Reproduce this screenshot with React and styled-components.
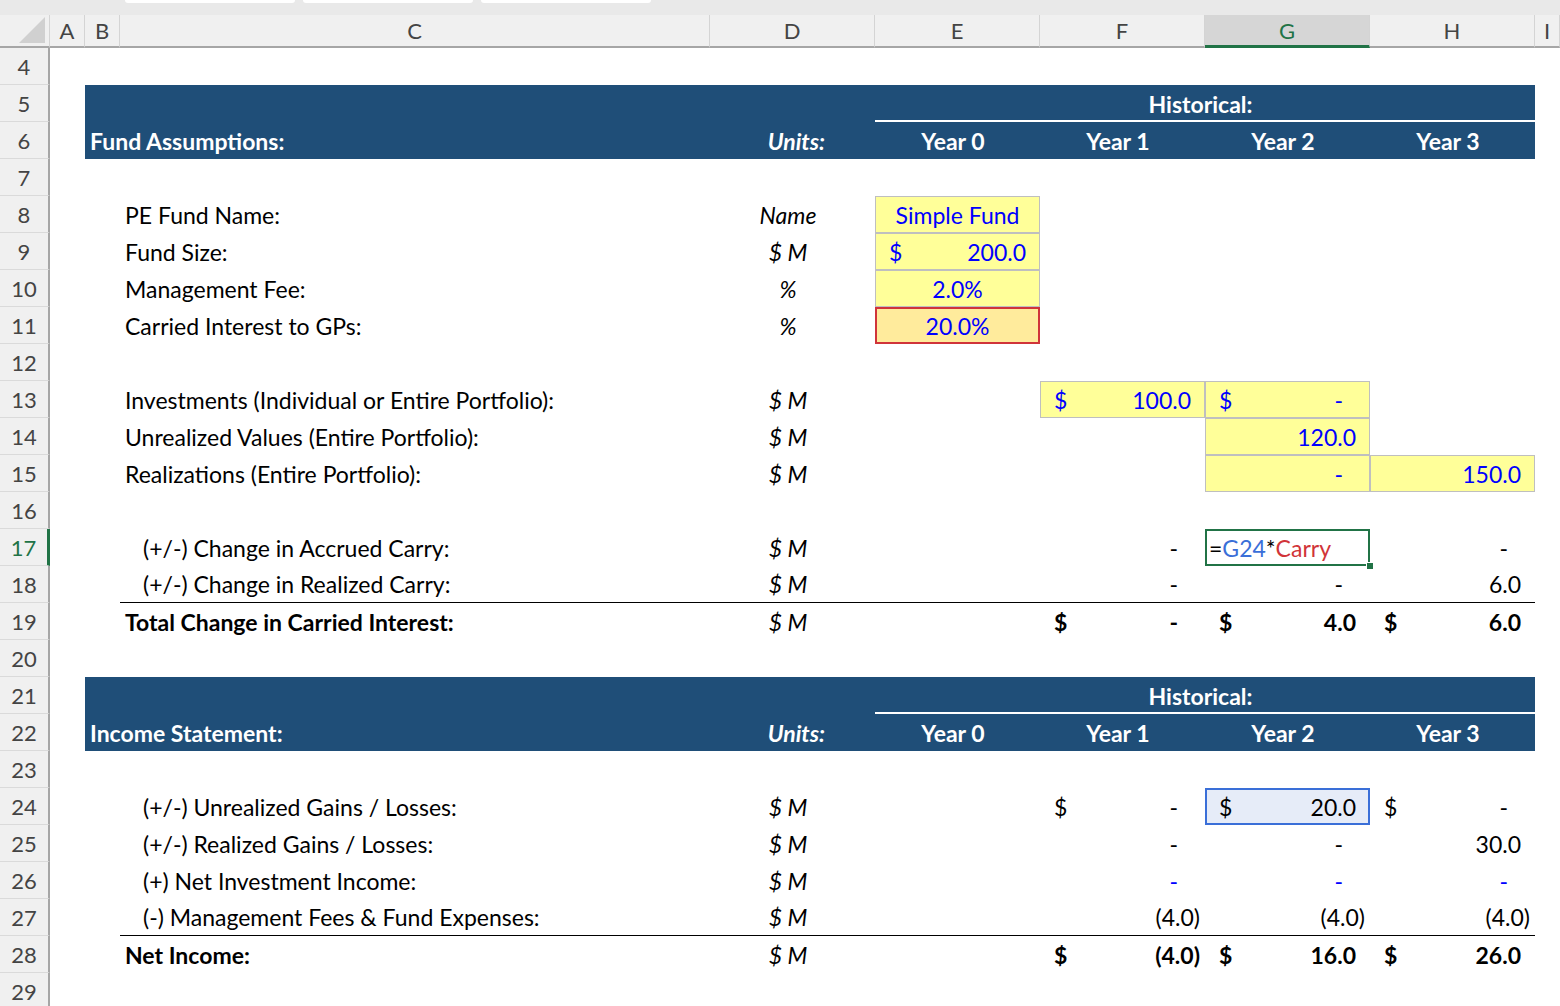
import React from 'react';
import styled, { createGlobalStyle } from 'styled-components';

const Global = createGlobalStyle`
  body { margin: 0; background: #fff; font-family: Lato, "Open Sans", sans-serif; overflow: hidden; }
`;

const COLS = '50px 35px 35px 590px 165px 165px 165px 165px 165px 1fr';
const NAVY = '#1f4e78';
const YELLOW = '#ffff99';

const TabStrip = styled.div`
  height: 15px;
  background: #e9e9e9;
  display: flex;
  gap: 8px;
  padding-left: 125px;
  & > span { width: 170px; height: 3px; background: #fff; border-radius: 0 0 6px 6px; }
`;

const Grid = styled.div`
  display: grid;
  grid-template-columns: ${COLS};
  height: ${p => p.$h || 37}px;
`;

const ColHead = styled.div`
  background: ${p => (p.$sel ? '#d6d6d6' : '#f0f0f0')};
  color: ${p => (p.$sel ? '#217346' : '#444')};
  border-right: 1px solid #d4d4d4;
  border-bottom: ${p => (p.$sel ? '3px solid #217346' : '2px solid #a6a6a6')};
  font-size: 22px;
  display: flex;
  align-items: center;
  justify-content: center;
  box-sizing: border-box;
`;

const Corner = styled(ColHead)`
  position: relative;
  &::after {
    content: '';
    position: absolute; right: 4px; bottom: 3px;
    border-left: 26px solid transparent;
    border-bottom: 26px solid #d0d0d0;
  }
`;

const RowHead = styled.div`
  background: #f0f0f0;
  color: ${p => (p.$sel ? '#217346' : '#444')};
  border-bottom: 1px solid #dadada;
  border-right: ${p => (p.$sel ? '3px solid #217346' : '2px solid #a6a6a6')};
  box-sizing: border-box;
  font-size: 22px;
  display: flex;
  align-items: center;
  justify-content: center;
`;

const Cell = styled.div`
  grid-column: ${p => p.$c} / span ${p => p.$s || 1};
  display: flex;
  align-items: center;
  justify-content: ${p => p.$j || 'flex-start'};
  padding: 0 ${p => p.$pr ?? 14}px 0 ${p => p.$pl ?? 5}px;
  box-sizing: border-box;
  font-size: 23px;
  white-space: nowrap;
  font-weight: ${p => (p.$b ? 700 : 400)};
  font-style: ${p => (p.$i ? 'italic' : 'normal')};
  color: ${p => p.$color || '#000'};
  background: ${p => p.$fill || 'transparent'};
  box-shadow: ${p => p.$box || 'none'};
  border-bottom: ${p => p.$line || 'none'};
  position: relative;
`;

const Band = styled(Cell)`
  background: ${NAVY};
  color: #fff;
  font-weight: 700;
`;

const HistBand = styled(Band)`
  margin-top: 0;
  &::after {
    content: '';
    position: absolute; left: 0; right: 0; bottom: 0;
    height: 2px; background: #fff;
  }
`;

const Handle = styled.span`
  position: absolute; right: -4px; bottom: -4px;
  width: 6px; height: 6px; background: #217346; border: 1px solid #fff;
`;

const inputBox = 'inset 0 0 0 1px #bfbfbf';

const Acc = ({ c, v, b, color, fill, box, line, pr }) => (
  <Cell $c={c} $j="space-between" $pl={14} $pr={pr ?? 14} $b={b} $color={color} $fill={fill} $box={box} $line={line}>
    <span>$</span><span>{v}</span>
  </Cell>
);

const Num = ({ c, v, b, color, fill, box, line }) => {
  const pr = v === '-' ? 27 : v.startsWith('(') ? 5 : 14;
  return <Cell $c={c} $j="flex-end" $pr={pr} $b={b} $color={color} $fill={fill} $box={box} $line={line}>{v}</Cell>;
};

const Units = ({ line }) => <Cell $c={5} $j="center" $i $line={line}>$ M</Cell>;

const Row = ({ n, sel, children }) => (
  <Grid>
    <RowHead $sel={sel}>{n}</RowHead>
    {children}
  </Grid>
);

const HeaderPair = ({ start, title }) => (
  <>
    <Row n={start}>
      <Band $c={3} $s={3} />
      <HistBand $c={6} $s={4} $j="center">Historical:</HistBand>
    </Row>
    <Row n={start + 1}>
      <Band $c={3} $s={2} $pl={5}>{title}</Band>
      <Band $c={5} $j="flex-end" $i $pr={50}>Units:</Band>
      {['Year 0', 'Year 1', 'Year 2', 'Year 3'].map((y, i) => (
        <Band key={y} $c={6 + i} $j="center">{y}</Band>
      ))}
    </Row>
  </>
);

const line = '1px solid #000';

export default function App() {
  return (
    <>
      <Global />
      <TabStrip><span /><span /><span /></TabStrip>
      <Grid $h={33}>
        <Corner />
        {['A', 'B', 'C', 'D', 'E', 'F', 'G', 'H', 'I'].map(l => (
          <ColHead key={l} $sel={l === 'G'}>{l}</ColHead>
        ))}
      </Grid>
      <Row n={4} />
      <HeaderPair start={5} title="Fund Assumptions:" />
      <Row n={7} />
      <Row n={8}>
        <Cell $c={4}>PE Fund Name:</Cell>
        <Cell $c={5} $j="center" $i>Name</Cell>
        <Cell $c={6} $j="center" $pr={5} $color="#0000ff" $fill={YELLOW} $box={inputBox}>Simple Fund</Cell>
      </Row>
      <Row n={9}>
        <Cell $c={4}>Fund Size:</Cell>
        <Units />
        <Acc c={6} v="200.0" color="#0000ff" fill={YELLOW} box={inputBox} />
      </Row>
      <Row n={10}>
        <Cell $c={4}>Management Fee:</Cell>
        <Cell $c={5} $j="center" $i>%</Cell>
        <Cell $c={6} $j="center" $pr={5} $color="#0000ff" $fill={YELLOW} $box={inputBox}>2.0%</Cell>
      </Row>
      <Row n={11}>
        <Cell $c={4}>Carried Interest to GPs:</Cell>
        <Cell $c={5} $j="center" $i>%</Cell>
        <Cell $c={6} $j="center" $pr={5} $color="#0000ff" $fill="#ffeb9c" $box="inset 0 0 0 2px #d0343a">20.0%</Cell>
      </Row>
      <Row n={12} />
      <Row n={13}>
        <Cell $c={4}>Investments (Individual or Entire Portfolio):</Cell>
        <Units />
        <Acc c={7} v="100.0" color="#0000ff" fill={YELLOW} box={inputBox} />
        <Acc c={8} v="-" pr={27} color="#0000ff" fill={YELLOW} box={inputBox} />
      </Row>
      <Row n={14}>
        <Cell $c={4}>Unrealized Values (Entire Portfolio):</Cell>
        <Units />
        <Num c={8} v="120.0" color="#0000ff" fill={YELLOW} box={inputBox} />
      </Row>
      <Row n={15}>
        <Cell $c={4}>Realizations (Entire Portfolio):</Cell>
        <Units />
        <Num c={8} v="-" color="#0000ff" fill={YELLOW} box={inputBox} />
        <Num c={9} v="150.0" color="#0000ff" fill={YELLOW} box={inputBox} />
      </Row>
      <Row n={16} />
      <Row n={17} sel>
        <Cell $c={4} $pl={23}>(+/-) Change in Accrued Carry:</Cell>
        <Units />
        <Num c={7} v="-" />
        <Cell $c={8} $pl={4} $box="inset 0 0 0 2px #217346">
          <span>=</span><span style={{ color: '#3a6fd8' }}>G24</span><span>*</span>
          <span style={{ color: '#d13438' }}>Carry</span>
          <Handle />
        </Cell>
        <Num c={9} v="-" />
      </Row>
      <Row n={18}>
        <Cell $c={4} $pl={23} $line={line}>(+/-) Change in Realized Carry:</Cell>
        <Units line={line} />
        <Cell $c={6} $line={line} />
        <Num c={7} v="-" line={line} />
        <Num c={8} v="-" line={line} />
        <Num c={9} v="6.0" line={line} />
      </Row>
      <Row n={19}>
        <Cell $c={4} $b>Total Change in Carried Interest:</Cell>
        <Units />
        <Acc c={7} v="-" pr={27} b />
        <Acc c={8} v="4.0" b />
        <Acc c={9} v="6.0" b />
      </Row>
      <Row n={20} />
      <HeaderPair start={21} title="Income Statement:" />
      <Row n={23} />
      <Row n={24}>
        <Cell $c={4} $pl={23}>(+/-) Unrealized Gains / Losses:</Cell>
        <Units />
        <Acc c={7} v="-" pr={27} />
        <Acc c={8} v="20.0" fill="#e6ecf8" box="inset 0 0 0 2px #3a6fd8" />
        <Acc c={9} v="-" pr={27} />
      </Row>
      <Row n={25}>
        <Cell $c={4} $pl={23}>(+/-) Realized Gains / Losses:</Cell>
        <Units />
        <Num c={7} v="-" />
        <Num c={8} v="-" />
        <Num c={9} v="30.0" />
      </Row>
      <Row n={26}>
        <Cell $c={4} $pl={23}>(+) Net Investment Income:</Cell>
        <Units />
        <Num c={7} v="-" color="#0000ff" />
        <Num c={8} v="-" color="#0000ff" />
        <Num c={9} v="-" color="#0000ff" />
      </Row>
      <Row n={27}>
        <Cell $c={4} $pl={23} $line={line}>(-) Management Fees &amp; Fund Expenses:</Cell>
        <Units line={line} />
        <Cell $c={6} $line={line} />
        <Num c={7} v="(4.0)" line={line} />
        <Num c={8} v="(4.0)" line={line} />
        <Num c={9} v="(4.0)" line={line} />
      </Row>
      <Row n={28}>
        <Cell $c={4} $b>Net Income:</Cell>
        <Units />
        <Acc c={7} v="(4.0)" pr={5} b />
        <Acc c={8} v="16.0" b />
        <Acc c={9} v="26.0" b />
      </Row>
      <Row n={29} />
    </>
  );
}
